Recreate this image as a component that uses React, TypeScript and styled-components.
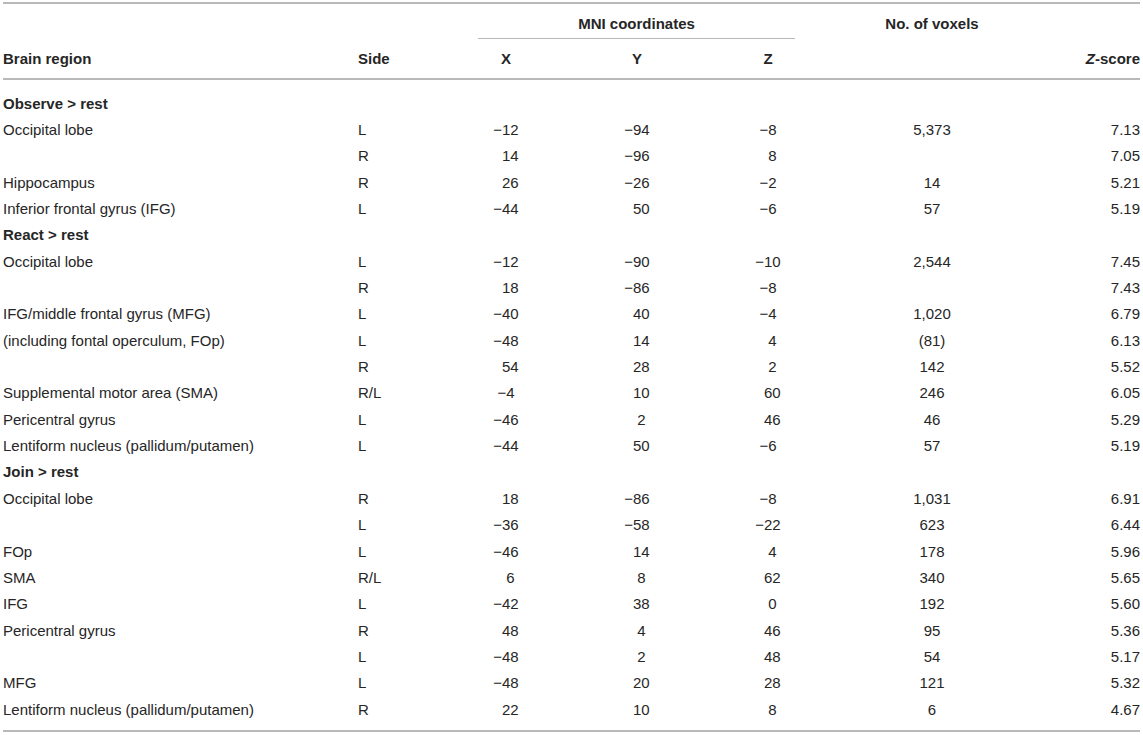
import React from "react";
import styled, { createGlobalStyle } from "styled-components";

const GlobalStyle = createGlobalStyle`
  html, body { margin: 0; padding: 0; background: #ffffff; }
  body { font-family: "Liberation Sans", Arial, Helvetica, sans-serif; color: #262626; }
`;

const COLS = "352px 86px 130px 132px 130px 198px 109px";
const LINE = "#b9b9b9";

const Page = styled.div`
  width: 1143px;
  padding: 2px 3px 0 3px;
  box-sizing: border-box;
`;

const Table = styled.div`
  border-top: 2px solid ${LINE};
  border-bottom: 2px solid ${LINE};
  font-size: 15px;
`;

const HeadTop = styled.div`
  display: grid;
  grid-template-columns: ${COLS};
  height: 35px;
  font-weight: bold;
`;

const SpanHead = styled.div<{ $from: number; $to: number }>`
  grid-column: ${(p) => p.$from} / ${(p) => p.$to};
  display: flex;
  justify-content: center;
  align-items: center;
  padding-top: 5px;
  padding-bottom: 1px;
  box-sizing: border-box;
`;

const Underlined = styled.div`
  grid-column: 3 / 6;
  margin: 0 38px 0 37px;
  border-bottom: 1px solid ${LINE};
  display: flex;
  justify-content: center;
  align-items: center;
  padding-top: 4px;
  box-sizing: border-box;
`;

const HeadBottom = styled.div`
  display: grid;
  grid-template-columns: ${COLS};
  height: 41px;
  align-items: center;
  padding-bottom: 0px;
  box-sizing: border-box;
  border-bottom: 2px solid ${LINE};
  font-weight: bold;
`;

const Body = styled.div`
  padding: 10px 0 8px;
`;

const Row = styled.div`
  display: grid;
  grid-template-columns: ${COLS};
  height: 26.35px;
  align-items: center;
  white-space: nowrap;
`;

const Cell = styled.div<{ $align?: "left" | "center" | "right"; $indent?: number }>`
  text-align: ${(p) => p.$align ?? "center"};
  padding-left: ${(p) => p.$indent ?? 0}px;
`;

const GroupTitle = styled.div`
  grid-column: 1 / 3;
  font-weight: bold;
`;

const Ghost = styled.span`
  visibility: hidden;
`;

const Italic = styled.i`
  font-style: italic;
`;

type DataRow = [string, string, string, string, string, string, string];
type Section = { title: string; rows: DataRow[] };

const sections: Section[] = [
  {
    title: "Observe > rest",
    rows: [
      ["Occipital lobe", "L", "−12", "−94", "−8", "5,373", "7.13"],
      ["", "R", "14", "−96", "8", "", "7.05"],
      ["Hippocampus", "R", "26", "−26", "−2", "14", "5.21"],
      ["Inferior frontal gyrus (IFG)", "L", "−44", "50", "−6", "57", "5.19"],
    ],
  },
  {
    title: "React > rest",
    rows: [
      ["Occipital lobe", "L", "−12", "−90", "−10", "2,544", "7.45"],
      ["", "R", "18", "−86", "−8", "", "7.43"],
      ["IFG/middle frontal gyrus (MFG)", "L", "−40", "40", "−4", "1,020", "6.79"],
      ["(including fontal operculum, FOp)", "L", "−48", "14", "4", "(81)", "6.13"],
      ["", "R", "54", "28", "2", "142", "5.52"],
      ["Supplemental motor area (SMA)", "R/L", "−4", "10", "60", "246", "6.05"],
      ["Pericentral gyrus", "L", "−46", "2", "46", "46", "5.29"],
      ["Lentiform nucleus (pallidum/putamen)", "L", "−44", "50", "−6", "57", "5.19"],
    ],
  },
  {
    title: "Join > rest",
    rows: [
      ["Occipital lobe", "R", "18", "−86", "−8", "1,031", "6.91"],
      ["", "L", "−36", "−58", "−22", "623", "6.44"],
      ["FOp", "L", "−46", "14", "4", "178", "5.96"],
      ["SMA", "R/L", "6", "8", "62", "340", "5.65"],
      ["IFG", "L", "−42", "38", "0", "192", "5.60"],
      ["Pericentral gyrus", "R", "48", "4", "46", "95", "5.36"],
      ["", "L", "−48", "2", "48", "54", "5.17"],
      ["MFG", "L", "−48", "20", "28", "121", "5.32"],
      ["Lentiform nucleus (pallidum/putamen)", "R", "22", "10", "8", "6", "4.67"],
    ],
  },
];

const Signed: React.FC<{ value: string }> = ({ value }) =>
  value.startsWith("−") ? (
    <>{value}</>
  ) : (
    <>
      <Ghost>−</Ghost>
      {value}
    </>
  );

export default function App() {
  return (
    <>
      <GlobalStyle />
      <Page>
        <Table>
          <HeadTop>
            <Underlined>MNI coordinates</Underlined>
            <SpanHead $from={6} $to={7}>No. of voxels</SpanHead>
          </HeadTop>
          <HeadBottom>
            <Cell $align="left">Brain region</Cell>
            <Cell $align="left" $indent={3}>Side</Cell>
            <Cell>X</Cell>
            <Cell>Y</Cell>
            <Cell>Z</Cell>
            <Cell />
            <Cell $align="right">
              <Italic>Z</Italic>-score
            </Cell>
          </HeadBottom>
          <Body>
            {sections.map((s) => (
              <React.Fragment key={s.title}>
                <Row>
                  <GroupTitle>{s.title}</GroupTitle>
                </Row>
                {s.rows.map((r, i) => (
                  <Row key={s.title + i}>
                    <Cell $align="left">{r[0]}</Cell>
                    <Cell $align="left" $indent={3}>{r[1]}</Cell>
                    <Cell><Signed value={r[2]} /></Cell>
                    <Cell><Signed value={r[3]} /></Cell>
                    <Cell><Signed value={r[4]} /></Cell>
                    <Cell>{r[5]}</Cell>
                    <Cell $align="right">{r[6]}</Cell>
                  </Row>
                ))}
              </React.Fragment>
            ))}
          </Body>
        </Table>
      </Page>
    </>
  );
}
